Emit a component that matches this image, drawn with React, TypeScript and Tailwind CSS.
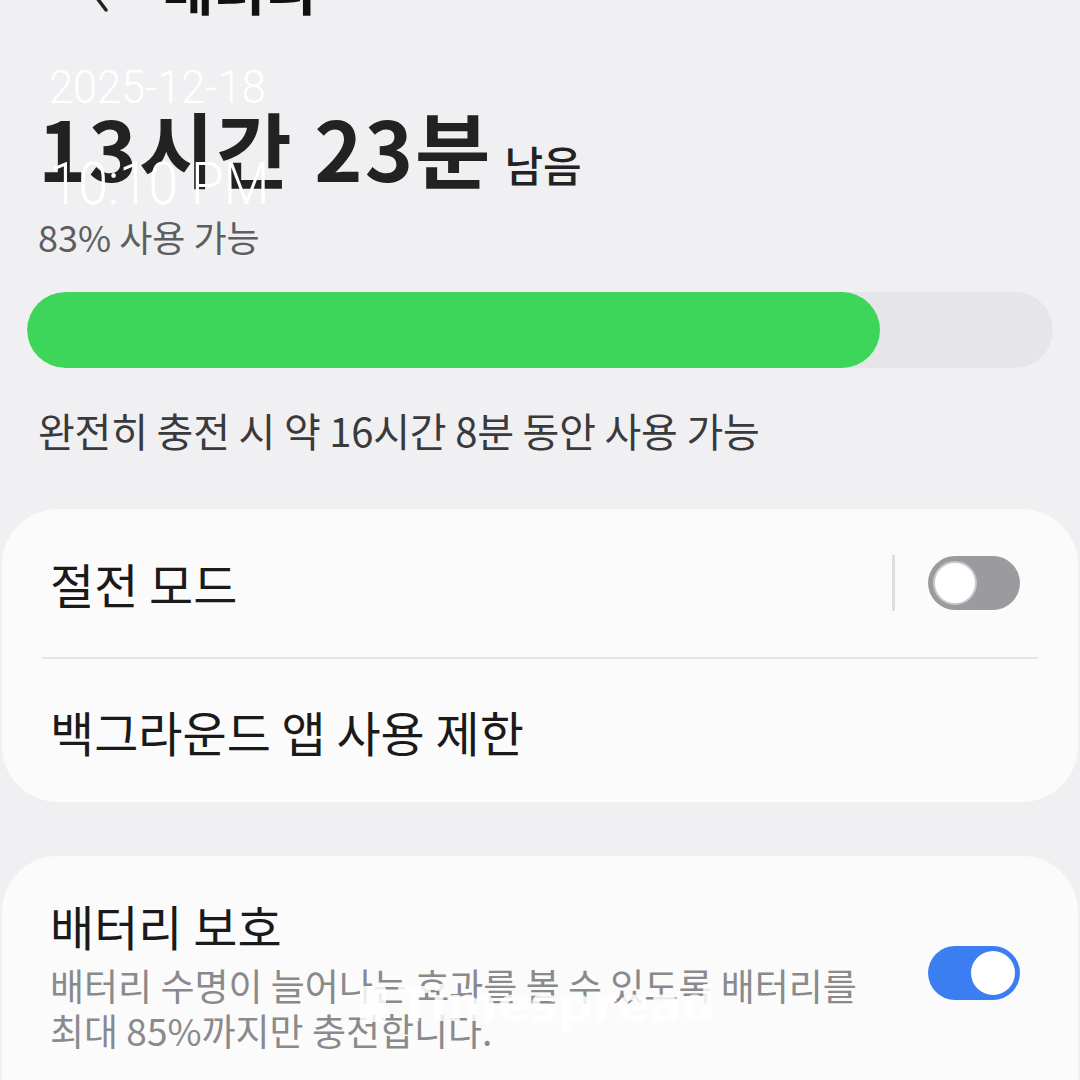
import React from "react";

const KR = "font-['Noto_Sans_CJK_KR','Noto_Sans',sans-serif]";

function Toggle({ on }: { on: boolean }) {
  return on ? (
    <div className="w-[92px] h-[54px] rounded-full bg-[#3b7ef2] flex items-center justify-end pr-[5px]">
      <div className="w-[44px] h-[44px] rounded-full bg-white" />
    </div>
  ) : (
    <div className="w-[92px] h-[54px] rounded-full bg-[#9b9b9f] flex items-center pl-[5px]">
      <div className="w-[44px] h-[44px] rounded-full bg-white border-[2px] border-[#c9c9cc]" />
    </div>
  );
}

export default function App() {
  return (
    <div className={`relative w-[1080px] h-[1080px] overflow-hidden bg-[#f0f0f2] ${KR}`}>
      {/* Header (cut off) */}
      <div className="flex items-center h-[60px] -mt-[44px] pl-[84px] text-[#111]">
        <svg width="26" height="56" viewBox="0 0 26 56" className="mr-[52px]">
          <path d="M22 4 L4 28 L22 52" fill="none" stroke="#222" strokeWidth="3.5" strokeLinecap="round" />
        </svg>
        <span className="text-[56px] font-bold leading-none">배터리</span>
      </div>

      {/* Summary */}
      <div className="pl-[38px] pt-[90px]">
        <div className="flex items-baseline text-[#222]">
          <span className="text-[82px] font-bold leading-none tracking-[2px]">13시간 23분</span>
          <span className="text-[42px] font-medium leading-none ml-[12px]">남음</span>
        </div>
        <div className="text-[36px] leading-none text-[#5e5e60] mt-[30px]">83% 사용 가능</div>
      </div>

      {/* Bar */}
      <div className="mx-[27px] mt-[38px] h-[76px] rounded-full bg-[#e6e6e8] overflow-hidden">
        <div className="h-full w-[853px] rounded-full bg-[#3dd65a]" />
      </div>

      <div className="pl-[38px] mt-[42px] text-[40px] leading-none text-[#3a3a3c] tracking-[-0.2px]">
        완전히 충전 시 약 16시간 8분 동안 사용 가능
      </div>

      {/* Card 1 */}
      <div className="mx-[2px] mt-[59px] rounded-[56px] bg-[#fbfbfb]">
        <div className="flex items-center h-[148px] pl-[48px] pr-[58px]">
          <span className="flex-1 text-[48px] text-[#1a1a1a] leading-none">절전 모드</span>
          <div className="w-[3px] h-[56px] bg-[#dedee0] mr-[33px]" />
          <Toggle on={false} />
        </div>
        <div className="mx-[40px] h-[2px] bg-[#e4e4e6]" />
        <div className="flex items-center h-[143px] pl-[48px]">
          <span className="text-[48px] text-[#1a1a1a] leading-none">백그라운드 앱 사용 제한</span>
        </div>
      </div>

      {/* Card 2 */}
      <div className="mx-[2px] mt-[54px] rounded-t-[56px] bg-[#fbfbfb] h-[260px] flex pl-[48px] pr-[58px] pt-[45px]">
        <div className="flex-1">
          <div className="text-[48px] text-[#1a1a1a] leading-none">배터리 보호</div>
          <div className="mt-[14px] text-[37px] leading-[45px] text-[#8a8a8c] w-[840px]">
            배터리 수명이 늘어나는 효과를 볼 수 있도록 배터리를 최대 85%까지만 충전합니다.
          </div>
        </div>
        <div className="pt-[45px]">
          <Toggle on={true} />
        </div>
      </div>

      {/* Timestamp overlay */}
      <div className="absolute left-[49px] top-[64px] font-['Roboto',sans-serif] text-white leading-none">
        <div className="text-[46px] font-light origin-left scale-x-[0.94]">2025-12-18</div>
        <div className="text-[60px] font-light mt-[44px] origin-left scale-x-[0.885]">10:10 PM</div>
      </div>

      {/* Watermark */}
      <div className="absolute left-[360px] top-[980px] flex items-center gap-[12px] text-white/85 font-['DejaVu_Sans',sans-serif] font-bold text-[48px] leading-none">
        <div className="w-[26px] h-[36px] rounded-[4px] bg-white/85" />
        <span>Timespread</span>
      </div>
    </div>
  );
}
